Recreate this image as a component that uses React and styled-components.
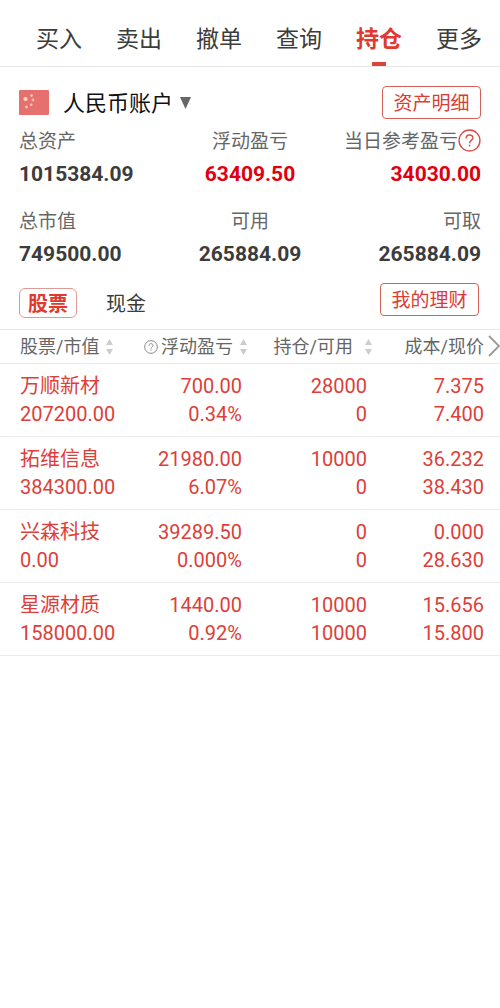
import * as React from "react";
import styled, { createGlobalStyle } from "styled-components";

const GlobalStyle = createGlobalStyle`
  * {
    box-sizing: border-box;
  }

  body {
    margin: 0;
    background: #fff;
    color: #3c3c3c;
    font-family: Roboto, "Noto Sans CJK SC", sans-serif;
    overflow-x: hidden;
  }

  button {
    margin: 0;
    padding: 0;
    border: none;
    background: none;
    color: inherit;
    font-family: inherit;
  }
`

const Nav = styled.nav`
  display: grid;
  grid-template-columns: repeat(6, 1fr);
  padding: 18px 1px 0 19px;
  border-bottom: 1px solid #e6e6e6;
`

const NavLink = styled.a`
  display: flex;
  flex-direction: column;
  align-items: center;
  color: ${props => props.$active ? "#e0392f" : "#3c3c3c"};
  font-size: 23px;
  font-weight: ${props => props.$active ? 700 : 400};
  line-height: 44px;
  text-decoration: none;

  &::after {
    content: "";
    width: 14px;
    height: 4px;
    background: ${props => props.$active ? "#d9453c" : "transparent"};
  }
`

const AccountBar = styled.div`
  display: flex;
  align-items: center;
  justify-content: space-between;
  padding: 19px 19px 6px;
`

const AccountButton = styled.button`
  display: flex;
  align-items: center;
  color: #111;
  font-size: 22px;
  line-height: 31px;
`

const AccountName = styled.span`
  margin: 0 7px 0 14px;
  padding-top: 2px;
`

const OutlineButton = styled.button`
  width: 99px;
  height: 33px;
  padding-top: 2px;
  border: 1px solid #d4605a;
  border-radius: 4px;
  color: #dc3c34;
  font-size: 19px;
  line-height: 29px;
`

const Summary = styled.dl`
  display: grid;
  grid-template-columns: repeat(3, 1fr);
  row-gap: 16px;
  margin: 0;
  padding: 0 19px;
`

const Figure = styled.div`
  display: flex;
  flex-direction: column;
  align-items: ${props => props.$align || "flex-start"};
`

const FigureLabel = styled.dt`
  display: flex;
  align-items: center;
  color: #666;
  font-size: 19px;
  line-height: 34px;
  white-space: nowrap;
`

const FigureValue = styled.dd`
  margin: 0;
  color: ${props => props.$red ? "#e00010" : "#3c3c3c"};
  font-size: 21px;
  font-weight: 700;
  line-height: 30px;
`

const IconButton = styled.button`
  display: flex;
  padding-bottom: 3px;
`

const TypeBar = styled.div`
  display: flex;
  align-items: flex-start;
  justify-content: space-between;
  padding: 14px 21px 11px 19px;
`

const TypeTabs = styled.div`
  display: flex;
  gap: 20px;
  padding-top: 5px;
`

const TypeTab = styled.button`
  width: 58px;
  height: 30px;
  padding-top: 2px;
  border: 1px solid ${props => props.$active ? "#e09a96" : "transparent"};
  border-radius: 6px;
  color: ${props => props.$active ? "#e0392f" : "#3c3c3c"};
  font-size: 20px;
  font-weight: ${props => props.$active ? 700 : 400};
  line-height: 26px;
`

const Holdings = styled.div`
  position: relative;
`

const Table = styled.table`
  width: 100%;
  table-layout: fixed;
  border-collapse: separate;
  border-spacing: 0;
`

const HeadCell = styled.th`
  height: 35px;
  padding: ${props => props.$last ? "0 16px 0 0" : "0 3px 0 0"};
  border-top: 1px solid #e8e8e8;
  border-bottom: 1px solid #e8e8e8;
  color: #666;
  font-size: 18px;
  font-weight: 400;
  line-height: 33px;

  &:first-child {
    padding-left: 20px;
  }
`

const HeadLabel = styled.div`
  display: flex;
  align-items: center;
  justify-content: ${props => props.$left ? "flex-start" : "flex-end"};
  gap: ${props => props.$wide ? 12 : 7}px;
  white-space: nowrap;
`

const HeadText = styled.span`
  display: flex;
  align-items: center;
  gap: 3px;
`

const Cell = styled.td`
  padding: 8px 8px 8px 0;
  border-bottom: 1px solid #ebebeb;
  color: #dd4038;
  font-size: 20px;
  line-height: 28px;
  text-align: right;

  &:first-child {
    padding-left: 20px;
    text-align: left;
  }

  &:last-child {
    padding-right: 16px;
  }
`

const Line = styled.div`
  height: 28px;
  white-space: nowrap;
`

const MoreButton = styled.button`
  position: absolute;
  top: 6px;
  right: 0;
  display: flex;
`

const Flag = () => (
  <svg width="30" height="25" viewBox="0 0 30 25" aria-hidden="true">
    <rect width="30" height="25" rx="1" fill="#e5706d" />
    <circle cx="6.500" cy="9" r="2.100" fill="#fbd8c8" />
    <g fill="#f6bfae">
      <circle cx="12.500" cy="5.500" r="1.400" />
      <circle cx="14" cy="10" r="1.400" />
      <circle cx="12.200" cy="14.800" r="1.400" />
      <circle cx="7.500" cy="17" r="1.400" />
    </g>
  </svg>
)

const Caret = () => (
  <svg width="11" height="12" viewBox="0 0 11 12" aria-hidden="true">
    <path d="M0 0h11L5.500 12z" fill="#666" />
  </svg>
)

const Help = ({ size, color, width }) => (
  <svg width={size} height={size} viewBox="0 0 22 22" fill="none" stroke={color} strokeWidth={width} aria-hidden="true">
    <circle cx="11" cy="11" r="10" />
    <path d="M7.800 9c0-2 1.300-3.300 3.200-3.300s3.200 1.200 3.200 2.900c0 2.100-3.200 2.500-3.200 5" />
    <path d="M11 15v1.800" />
  </svg>
)

const Sort = () => (
  <svg width="7" height="16" viewBox="0 0 7 16" aria-hidden="true">
    <path d="M3.500 0L7 6H0zM0 10h7l-3.500 6z" fill="#ccc" />
  </svg>
)

const Chevron = () => (
  <svg width="12" height="22" viewBox="0 0 12 22" fill="none" stroke="#999" strokeWidth="1.800" aria-hidden="true">
    <path d="M1 1l10 10L1 21" />
  </svg>
)

const navItems = ["买入", "卖出", "撤单", "查询", "持仓", "更多"]

const figures = [
  { label: "总资产", value: "1015384.09" },
  { label: "浮动盈亏", value: "63409.50", align: "center", red: true },
  { label: "当日参考盈亏", value: "34030.00", align: "flex-end", red: true, help: true },
  { label: "总市值", value: "749500.00" },
  { label: "可用", value: "265884.09", align: "center" },
  { label: "可取", value: "265884.09", align: "flex-end" },
]

const holdings = [
  [["万顺新材", "207200.00"], ["700.00", "0.34%"], ["28000", "0"], ["7.375", "7.400"]],
  [["拓维信息", "384300.00"], ["21980.00", "6.07%"], ["10000", "0"], ["36.232", "38.430"]],
  [["兴森科技", "0.00"], ["39289.50", "0.000%"], ["0", "0"], ["0.000", "28.630"]],
  [["星源材质", "158000.00"], ["1440.00", "0.92%"], ["10000", "10000"], ["15.656", "15.800"]],
]

const App = () => {
  const [type, setType] = React.useState("股票")

  return (
    <main>
      <GlobalStyle />
      <Nav>
        {navItems.map(item => (
          <NavLink key={item} href="#" $active={item === "持仓"}>{item}</NavLink>
        ))}
      </Nav>

      <AccountBar>
        <AccountButton>
          <Flag />
          <AccountName>人民币账户</AccountName>
          <Caret />
        </AccountButton>
        <OutlineButton>资产明细</OutlineButton>
      </AccountBar>

      <Summary>
        {figures.map(figure => (
          <Figure key={figure.label} $align={figure.align}>
            <FigureLabel>
              {figure.label}
              {figure.help && (
                <IconButton aria-label="说明">
                  <Help size={23} color="#dc4a44" width={1.3} />
                </IconButton>
              )}
            </FigureLabel>
            <FigureValue $red={figure.red}>{figure.value}</FigureValue>
          </Figure>
        ))}
      </Summary>

      <TypeBar>
        <TypeTabs>
          {["股票", "现金"].map(item => (
            <TypeTab key={item} $active={item === type} onClick={() => setType(item)}>{item}</TypeTab>
          ))}
        </TypeTabs>
        <OutlineButton>我的理财</OutlineButton>
      </TypeBar>

      <Holdings>
        <Table>
          <thead>
            <tr>
              <HeadCell><HeadLabel $left>股票/市值<Sort /></HeadLabel></HeadCell>
              <HeadCell>
                <HeadLabel>
                  <HeadText><Help size={14} color="#888" width={1.5} />浮动盈亏</HeadText>
                  <Sort />
                </HeadLabel>
              </HeadCell>
              <HeadCell><HeadLabel $wide>持仓/可用<Sort /></HeadLabel></HeadCell>
              <HeadCell $last><HeadLabel>成本/现价</HeadLabel></HeadCell>
            </tr>
          </thead>
          <tbody>
            {holdings.map(row => (
              <tr key={row[0][0]}>
                {row.map(([top, bottom], i) => (
                  <Cell key={i}>
                    <Line>{top}</Line>
                    <Line>{bottom}</Line>
                  </Cell>
                ))}
              </tr>
            ))}
          </tbody>
        </Table>
        <MoreButton aria-label="更多列"><Chevron /></MoreButton>
      </Holdings>
    </main>
  )
}

export default App
